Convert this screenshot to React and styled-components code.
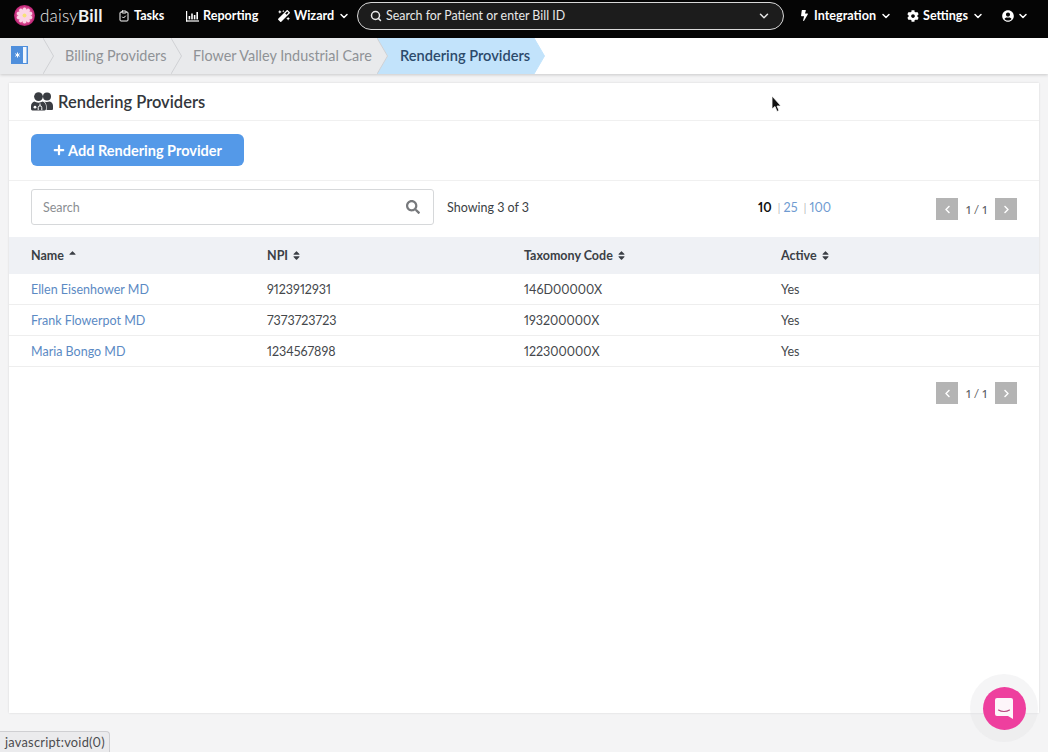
import React from 'react'
import styled, { createGlobalStyle } from 'styled-components'
import { FaBolt, FaCog, FaUserCircle, FaMagic, FaPlus, FaSearch, FaSort, FaSortUp, FaChevronLeft, FaChevronRight } from 'react-icons/fa'
import { LuChevronDown, LuClipboardCheck, LuSearch } from 'react-icons/lu'

const Global = createGlobalStyle`
  html, body { margin: 0; height: 100%; }
  body {
    background: #f4f4f5;
    font-family: Lato, "Liberation Sans", sans-serif;
    font-variant-numeric: proportional-nums;
    font-feature-settings: "pnum";
    color: #3b3f45;
    overflow: hidden;
  }
  * { box-sizing: border-box; }
`

const Page = styled.div`
  width: 1048px;
  height: 752px;
  display: flex;
  flex-direction: column;
`

const NavBar = styled.header`
  height: 38px;
  flex: none;
  background: #050505;
  display: flex;
  align-items: center;
  color: #fff;
  padding: 0 0 7px 14px;
`

const Logo = styled.div`
  display: flex;
  align-items: center;
  width: 104px;
  flex: none;
  gap: 5px;
  font-size: 17px;
  font-weight: 300;
  letter-spacing: 0.2px;
  color: #e8e8e8;
  b { font-weight: 700; color: #f2f2f2; }
`

const NavItem = styled.div`
  display: flex;
  align-items: center;
  flex: none;
  gap: ${p => p.$gap || 4}px;
  width: ${p => p.$w}px;
  font-size: 12.6px;
  font-weight: 700;
  white-space: nowrap;
`

const SearchPill = styled.div`
  flex: none;
  width: 427px;
  height: 28px;
  margin: 0 15px 0 0;
  border: 1px solid #d8d8d8;
  border-radius: 15px;
  background: #1c1c1c;
  display: flex;
  align-items: center;
  padding: 0 12px;
  gap: 4px;
  font-size: 12.4px;
  color: #e8e8e8;
  span { flex: 1; }
`

const Crumbs = styled.nav`
  height: 36px;
  flex: none;
  background: #fff;
  box-shadow: 0 1px 3px rgba(0, 0, 0, 0.18);
  display: flex;
  align-items: stretch;
  font-size: 14.4px;
`

const HomeCrumb = styled.div`
  width: 43px;
  position: relative;
  background: #e9eaec;
  display: flex;
  align-items: center;
  padding: 0 0 2px 11px;
`

const Crumb = styled.div`
  position: relative;
  display: flex;
  align-items: center;
  padding: 0 0 2px ${p => (p.$active ? 23 : 22)}px;
  background: ${p => (p.$active ? '#c2e3fb' : '#e9eaec')};
  color: ${p => (p.$active ? '#2c4a6b' : '#8f9296')};
  font-size: ${p => (p.$active ? 14.6 : 14.4)}px;
  font-weight: ${p => (p.$active ? 600 : 400)};
  width: ${p => p.$w}px;
  white-space: nowrap;
`

const Chevron = styled.svg`
  position: absolute;
  top: 0;
  left: 100%;
  width: 11px;
  height: 36px;
  z-index: 1;
`

const Card = styled.main`
  margin: 9px 9px 0;
  width: 1030px;
  height: 630px;
  background: #fff;
  box-shadow: 0 0 2px rgba(0, 0, 0, 0.12);
`

const CardTitle = styled.div`
  height: 38px;
  border-bottom: 1px solid #f0f0f0;
  display: flex;
  align-items: center;
  padding: 0 23px 0 22px;
  gap: 5px;
  font-size: 16.5px;
  font-weight: 600;
  color: #33373c;
`

const ActionRow = styled.div`
  height: 60px;
  border-bottom: 1px solid #f0f0f0;
  padding: 13px 22px 0;
`

const AddButton = styled.button`
  width: 213px;
  height: 32px;
  border: 0;
  border-radius: 6px;
  background: #5499e8;
  color: #fff;
  font: 700 14.5px Lato, sans-serif;
  display: flex;
  align-items: center;
  justify-content: center;
  gap: 3px;
`

const FilterRow = styled.div`
  height: 56px;
  display: flex;
  align-items: center;
  padding: 0 22px 4px;
  font-size: 12.5px;
`

const SearchBox = styled.div`
  width: 403px;
  height: 36px;
  border: 1px solid #d6d8da;
  border-radius: 3px;
  display: flex;
  align-items: center;
  justify-content: space-between;
  padding: 0 13px 0 11px;
  color: #8b8e92;
  margin-right: 13px;
`

const Showing = styled.div`
  width: 311px;
  flex: none;
`

const PageSizes = styled.div`
  flex: 1;
  display: flex;
  color: #8a8d90;
  font-size: 12.6px;
  a { color: #6f9bd1; }
  b { color: #111; }
`

const Divider = styled.span`
  margin: 0 3px 0 6px;
  font-weight: 300;
`

const PagerWrap = styled.div`
  display: flex;
  align-items: center;
  color: #55585c;
  font-size: 12px;
  margin-top: ${p => (p.$offset ? 4 : 0)}px;
`

const PagerBtn = styled.div`
  width: 22px;
  height: 22px;
  background: #b4b4b4;
  color: #fff;
  display: flex;
  align-items: center;
  justify-content: center;
`

const PagerText = styled.span`
  width: 37px;
  text-align: center;
`

const Table = styled.div`
  display: grid;
  grid-template-columns: 258px 257px 257px 1fr;
  font-size: 12.5px;
`

const HeadCell = styled.div`
  height: 37px;
  padding-bottom: 1px;
  background: #eff1f5;
  display: flex;
  align-items: center;
  gap: 3px;
  font-weight: 700;
  padding-left: ${p => (p.$first ? 22 : 0)}px;
  color: #3b3f45;
`

const Cell = styled.div`
  height: 31px;
  border-bottom: 1px solid #eeeeee;
  display: flex;
  align-items: center;
  padding-left: ${p => (p.$first ? 22 : 0)}px;
  color: ${p => (p.$link ? '#5b8ac4' : '#44474b')};
`

const BottomPager = styled.div`
  display: flex;
  justify-content: flex-end;
  padding: 15px 22px 0;
`

const Cursor = styled.svg`
  position: absolute;
  left: 771px;
  top: 95px;
`

const ChatHalo = styled.div`
  position: absolute;
  left: 970px;
  top: 674px;
  width: 68px;
  height: 68px;
  border-radius: 50%;
  background: rgba(225, 225, 228, 0.35);
  display: flex;
  align-items: center;
  justify-content: center;
`

const ChatButton = styled.div`
  width: 43px;
  height: 43px;
  border-radius: 50%;
  background: #ee3f9e;
  display: flex;
  align-items: center;
  justify-content: center;
`

const StatusBar = styled.div`
  position: absolute;
  left: 0;
  bottom: 0;
  height: 21px;
  width: 110px;
  padding: 0 5px;
  background: #ebebed;
  border: 1px solid #cfcfd2;
  border-left: 0;
  border-bottom: 0;
  border-top-right-radius: 4px;
  font-size: 12.8px;
  letter-spacing: 0.25px;
  color: #4b4b4f;
  display: flex;
  align-items: center;
  white-space: nowrap;
`

function Flower() {
  const petals = Array.from({ length: 10 }, (_, i) => i * 36)
  return (
    <svg width="21" height="21" viewBox="0 0 21 21">
      <defs>
        <radialGradient id="fl" cx="50%" cy="50%" r="50%">
          <stop offset="55%" stopColor="#f06aa8" />
          <stop offset="100%" stopColor="#b81d71" />
        </radialGradient>
      </defs>
      <circle cx="10.5" cy="10.5" r="10.5" fill="url(#fl)" />
      {petals.map(a => (
        <ellipse key={a} cx="10.5" cy="6" rx="2" ry="3.6" fill="#fbd3e6" transform={`rotate(${a} 10.5 10.5)`} />
      ))}
      <circle cx="10.5" cy="10.5" r="2" fill="#f7e27a" />
    </svg>
  )
}

function BarsIcon() {
  return (
    <svg width="13" height="12" viewBox="0 0 13 12" fill="#fff">
      <rect x="0" y="1" width="1.2" height="10.5" />
      <rect x="0" y="10.4" width="13" height="1.2" />
      <rect x="2.6" y="6" width="1.6" height="3.4" />
      <rect x="5.2" y="3.5" width="1.6" height="5.9" />
      <rect x="7.8" y="5" width="1.6" height="4.4" />
      <rect x="10.4" y="2" width="1.6" height="7.4" />
    </svg>
  )
}

function HomeIcon() {
  return (
    <svg width="17" height="18" viewBox="0 0 17 18">
      <rect width="17" height="18" fill="#4f8fdc" />
      <rect x="12" y="1" width="3.5" height="16" fill="#f0f6fd" />
      <path d="M6.5 6.5v5M4.3 7.7l4.4 2.6M8.7 7.7l-4.4 2.6" stroke="#fff" strokeWidth="1" />
    </svg>
  )
}

function DoctorsIcon() {
  return (
    <svg width="22" height="19" viewBox="0 0 22 19" fill="#3a3d42">
      <circle cx="7.5" cy="4.6" r="4.4" />
      <circle cx="16" cy="4.4" r="4" />
      <path d="M13.5 9.5c1 .4 1.7.5 2.5.5 1 0 1.8-.2 2.6-.5 2 .3 3.4 2 3.4 4.2V17a1 1 0 0 1-1 1h-5.4v-3.5c0-2-.9-3.8-2.1-5z" />
      <path d="M3.2 9.6c1.3.7 2.8 1.1 4.3 1.1s3-.4 4.3-1.1c1.8.6 3.2 2.4 3.2 4.6V17a1.4 1.4 0 0 1-1.4 1.4H1.4A1.4 1.4 0 0 1 0 17v-2.8c0-2.2 1.4-4 3.2-4.6z" />
      <circle cx="4" cy="15.2" r="1.4" fill="#fff" />
      <path d="M9 11.5v2.3M7.2 18v-2.4a1.8 1.8 0 0 1 3.6 0V18" stroke="#fff" strokeWidth="1" fill="none" />
    </svg>
  )
}

function CrumbEdge({ fill, stroke }) {
  return (
    <Chevron viewBox="0 0 11 36">
      <path d="M0 0 L10.5 18 L0 36 Z" fill={fill} />
      <path d="M0 0 L10.5 18 L0 36" fill="none" stroke={stroke} strokeWidth="1" />
    </Chevron>
  )
}

function Pager({ offset }) {
  return (
    <PagerWrap $offset={offset}>
      <PagerBtn><FaChevronLeft size={9} /></PagerBtn>
      <PagerText>1 / 1</PagerText>
      <PagerBtn><FaChevronRight size={9} /></PagerBtn>
    </PagerWrap>
  )
}

const providers = [
  ['Ellen Eisenhower MD', '9123912931', '146D00000X', 'Yes'],
  ['Frank Flowerpot MD', '7373723723', '193200000X', 'Yes'],
  ['Maria Bongo MD', '1234567898', '122300000X', 'Yes'],
]

export default function App() {
  return (
    <Page>
      <Global />
      <NavBar>
        <Logo><Flower /><span>daisy<b>Bill</b></span></Logo>
        <NavItem $w={68}><LuClipboardCheck size={12} />Tasks</NavItem>
        <NavItem $w={92}><BarsIcon />Reporting</NavItem>
        <NavItem $w={79} $gap={4}><FaMagic size={12} />Wizard<LuChevronDown size={12} strokeWidth={3} /></NavItem>
        <SearchPill>
          <LuSearch size={12} strokeWidth={3} />
          <span>Search for Patient or enter Bill ID</span>
          <LuChevronDown size={14} strokeWidth={2.5} />
        </SearchPill>
        <NavItem $w={108} $gap={4}><FaBolt size={11} />Integration<LuChevronDown size={12} strokeWidth={3} /></NavItem>
        <NavItem $w={95} $gap={4}><FaCog size={12} />Settings<LuChevronDown size={12} strokeWidth={3} /></NavItem>
        <NavItem $w={30} $gap={3}><FaUserCircle size={12} /><LuChevronDown size={12} strokeWidth={3} /></NavItem>
      </NavBar>
      <Crumbs>
        <HomeCrumb><HomeIcon /><CrumbEdge fill="#e9eaec" stroke="#d0d1d4" /></HomeCrumb>
        <Crumb $w={128}>Billing Providers<CrumbEdge fill="#e9eaec" stroke="#d0d1d4" /></Crumb>
        <Crumb $w={206}>Flower Valley Industrial Care<CrumbEdge fill="#e9eaec" stroke="#d0d1d4" /></Crumb>
        <Crumb $active $w={157}>Rendering Providers<CrumbEdge fill="#c2e3fb" stroke="#c2e3fb" /></Crumb>
      </Crumbs>
      <Card>
        <CardTitle><DoctorsIcon />Rendering Providers</CardTitle>
        <ActionRow>
          <AddButton><FaPlus size={12} />Add Rendering Provider</AddButton>
        </ActionRow>
        <FilterRow>
          <SearchBox>Search<FaSearch size={14} color="#77797c" /></SearchBox>
          <Showing>Showing 3 of 3</Showing>
          <PageSizes><b>10</b><Divider>|</Divider><a>25</a><Divider>|</Divider><a>100</a></PageSizes>
          <Pager offset />
        </FilterRow>
        <Table>
          <HeadCell $first>Name <FaSortUp size={11} /></HeadCell>
          <HeadCell>NPI <FaSort size={11} /></HeadCell>
          <HeadCell>Taxomony Code <FaSort size={11} /></HeadCell>
          <HeadCell>Active <FaSort size={11} /></HeadCell>
          {providers.map((row, i) => row.map((val, j) => (
            <Cell key={val + j + i} $first={j === 0} $link={j === 0}>{val}</Cell>
          )))}
        </Table>
        <BottomPager><Pager /></BottomPager>
      </Card>
      <Cursor width="12" height="18" viewBox="0 0 12 18">
        <path d="M1 1 L1 14 L4 11.5 L6 16.5 L8 15.5 L6 11 L10 11 Z" fill="#111" stroke="#fff" strokeWidth="0.8" />
      </Cursor>
      <ChatHalo>
        <ChatButton>
          <svg width="18" height="21" viewBox="0 0 18 21">
            <path d="M2 0h14a2 2 0 0 1 2 2v19l-5-3H2a2 2 0 0 1-2-2V2a2 2 0 0 1 2-2z" fill="#fdf5fa" />
            <path d="M3.5 12c3 2 8 2 11 0" fill="none" stroke="#b8467f" strokeWidth="1.1" strokeLinecap="round" />
          </svg>
        </ChatButton>
      </ChatHalo>
      <StatusBar>javascript:void(0)</StatusBar>
    </Page>
  )
}
